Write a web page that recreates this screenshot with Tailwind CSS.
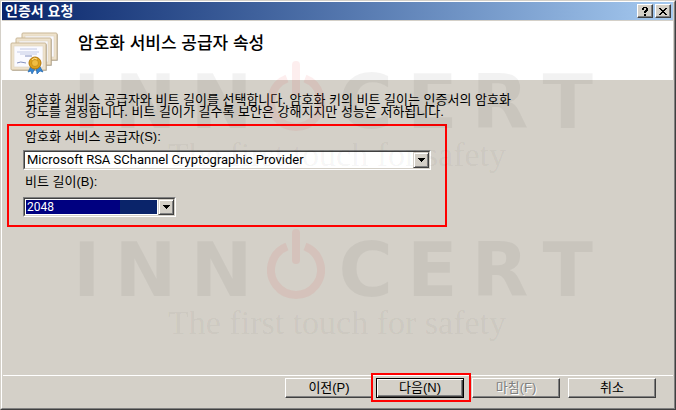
<!DOCTYPE html>
<html lang="ko">
<head>
    <meta charset="UTF-8">
    <title>인증서 요청</title>
    <meta name="viewport" content="width=device-width, initial-scale=1.0">
    <script src="https://cdn.jsdelivr.net/npm/@tailwindcss/browser@4"></script>
</head>
<body class="bg-[#d4d0c8] text-black text-[13px] font-['Liberation_Sans','Noto_Sans_CJK_KR',sans-serif]">
    <div class="relative min-h-screen flex flex-col overflow-hidden border-l border-t border-r border-b border-[#d4d0c8] border-r-[#404040] border-b-[#404040]">
        <div class="grow flex flex-col border border-white border-r-[#808080] border-b-[#808080]">

            <!-- Title bar -->
            <header class="h-[18px] mr-px flex items-center pl-[3px] pr-[2px] bg-linear-to-r from-[#0a246a] to-[#a6caf0]">
                <h1 class="grow text-white text-[14px] leading-[18px] font-bold">인증서 요청</h1>
                <div class="flex gap-[2px]">
                    <button aria-label="도움말" class="w-4 h-[14px] flex items-center justify-center bg-[#d4d0c8] border border-white border-r-[#404040] border-b-[#404040] shadow-[inset_-1px_-1px_#808080]">
                        <svg class="w-[6px] h-[9px]" viewBox="0 0 6 9" shape-rendering="crispEdges"><path d="M1 0h4v1h1v3h-1v1h-1v1h-2v-2h1v-1h1v-2h-2v2h-2v-2h1zM2 7h2v2h-2z"/></svg>
                    </button>
                    <button aria-label="닫기" class="w-4 h-[14px] flex items-center justify-center bg-[#d4d0c8] border border-white border-r-[#404040] border-b-[#404040] shadow-[inset_-1px_-1px_#808080]">
                        <svg class="w-2 h-[7px]" viewBox="0 0 8 7" shape-rendering="crispEdges"><path d="M0 0h2v1h1v1h2v-1h1v-1h2v1h-1v1h-1v1h-1v1h1v1h1v1h1v1h-2v-1h-1v-1h-2v1h-1v1h-2v-1h1v-1h1v-1h1v-1h-1v-1h-1v-1h-1z"/></svg>
                    </button>
                </div>
            </header>

            <!-- Wizard heading -->
            <div class="mt-px mr-px h-[59px] flex items-start bg-white pl-2 pt-[11px]">
                <svg class="w-12 h-11 shrink-0" viewBox="0 0 48 44">
                    <defs>
                        <g id="sheet">
                            <rect x="1" y="1" width="35" height="27" rx="1" fill="#8a8377" opacity=".6"/>
                            <rect width="35" height="27" rx="1" fill="#eee2cc" stroke="#c9b797"/>
                            <rect x="3" y="3" width="29" height="21" fill="#fafaff" stroke="#ded3c0" stroke-width=".6"/>
                        </g>
                    </defs>
                    <use href="#sheet" x="12" y="1"/>
                    <use href="#sheet" x="6" y="6"/>
                    <use href="#sheet" x="1" y="11"/>
                    <path d="M10 17h17M7 20h22M10 22h17" stroke="#b4bddd" stroke-width=".8"/>
                    <path d="M15 24h7M7 31q3-2 9 0" stroke="#7784b5" stroke-width=".9" fill="none"/>
                    <path d="M21 34l-3 6 3-1 1 3 4-7zM26 35l1 7 3-3 3 1-4-7z" fill="#3486d5" stroke="#165da4" stroke-width=".6"/>
                    <circle cx="25" cy="31" r="6" fill="#dda11c" stroke="#b4780b"/>
                    <circle cx="25" cy="31" r="3.5" fill="#efbd42" stroke="#be850f" stroke-width=".7"/>
                    <path d="M22 28q2-3 5-1" fill="none" stroke="#ffe59b"/>
                </svg>
                <h2 class="ml-5 text-[17px] leading-6 font-medium">암호화 서비스 공급자 속성</h2>
            </div>

            <!-- Settings -->
            <main class="grow pl-[5px] pt-[14px]">
                <p class="pl-[18px] leading-[12px]">암호화 서비스 공급자와 비트 길이를 선택합니다. 암호화 키의 비트 길이는 인증서의 암호화<br>강도를 결정합니다. 비트 길이가 길수록 보안은 강해지지만 성능은 저하됩니다.</p>

                <form class="mt-[6px] w-[66%] h-[103px] border-2 border-[#ff0000] pl-[14px] pr-[14px] flex flex-col items-start">
                    <label for="provider" class="mt-[2px] leading-[18px] pl-[2px]">암호화 서비스 공급자(S):</label>
                    <div class="relative mt-1 w-full h-5 border border-[#808080] border-r-white border-b-white">
                        <select id="provider" class="block appearance-none w-full h-[18px] bg-white border border-[#404040] border-r-[#d4d0c8] border-b-[#d4d0c8] pl-[2px] font-['Roboto'] leading-4 rounded-none outline-none">
                            <option>Microsoft RSA SChannel Cryptographic Provider</option>
                        </select>
                        <span class="pointer-events-none absolute top-px right-px w-4 h-4 flex items-center justify-center bg-[#d4d0c8] border border-[#d4d0c8] border-r-[#404040] border-b-[#404040] shadow-[inset_1px_1px_#fff,inset_-1px_-1px_#808080]">
                            <svg class="w-[7px] h-1" viewBox="0 0 7 4" shape-rendering="crispEdges"><path d="M0 0h7v1h-1v1h-1v1h-1v1h-1v-1h-1v-1h-1v-1h-1z"/></svg>
                        </span>
                    </div>
                    <label for="bits" class="mt-[3px] leading-[18px] pl-[2px]">비트 길이(B):</label>
                    <div class="relative mt-[6px] w-[153px] h-5 border border-[#808080] border-r-white border-b-white">
                        <div class="h-[18px] bg-white border border-[#404040] border-r-[#d4d0c8] border-b-[#d4d0c8] p-px pr-[17px]">
                            <select id="bits" class="block appearance-none w-full h-[14px] bg-linear-to-r from-[#000080] from-72% to-[#0a246a] to-72% text-white pl-px font-['Roboto'] text-[12px] leading-[14px] rounded-none outline-none">
                                <option>2048</option>
                            </select>
                        </div>
                        <span class="pointer-events-none absolute top-px right-px w-4 h-4 flex items-center justify-center bg-[#d4d0c8] border border-[#d4d0c8] border-r-[#404040] border-b-[#404040] shadow-[inset_1px_1px_#fff,inset_-1px_-1px_#808080]">
                            <svg class="w-[7px] h-1" viewBox="0 0 7 4" shape-rendering="crispEdges"><path d="M0 0h7v1h-1v1h-1v1h-1v1h-1v-1h-1v-1h-1v-1h-1z"/></svg>
                        </span>
                    </div>
                </form>
            </main>

            <!-- Wizard buttons -->
            <footer class="ml-px mr-px border-t border-white pt-[2px] pb-[10px] pr-[17px] flex justify-end gap-2">
                <div class="flex gap-[3px]">
                    <button class="w-[88px] h-5 leading-[18px] bg-[#d4d0c8] border border-white border-r-[#404040] border-b-[#404040] shadow-[inset_-1px_-1px_#808080]">이전(P)</button>
                    <div class="relative">
                        <button class="w-[88px] h-5 leading-[18px] bg-[#d4d0c8] border border-black shadow-[inset_1px_1px_#fff,inset_-1px_-1px_#404040,inset_-2px_-2px_#808080]">다음(N)</button>
                        <span class="pointer-events-none absolute -top-[5px] -bottom-[4px] -left-[5px] -right-[7px] border-2 border-[#ff0000]"></span>
                    </div>
                </div>
                <button disabled class="w-[88px] h-5 leading-[18px] text-[#808080] text-shadow-[1px_1px_0_#fff] bg-[#d4d0c8] border border-white border-r-[#404040] border-b-[#404040] shadow-[inset_-1px_-1px_#808080]">마침(F)</button>
                <button class="w-[88px] h-5 leading-[18px] bg-[#d4d0c8] border border-white border-r-[#404040] border-b-[#404040] shadow-[inset_-1px_-1px_#808080]">취소</button>
            </footer>
        </div>

        <!-- Watermarks -->
        <div aria-hidden="true" class="pointer-events-none absolute inset-x-0 top-[60px] flex flex-col gap-12 pl-[72px] pr-[82px] text-black/5">
            <div class="h-[120px]">
                <div class="flex justify-between h-[70px] font-['DejaVu_Sans'] font-bold text-[74px] leading-[83px]">
                    <span>I</span><span>N</span><span>N</span>
                    <svg class="w-[58px] h-[70px] text-[#e02020]/8" viewBox="0 0 58 70" fill="none" stroke="currentColor">
                        <path d="M20 17.600A25 25 0 1 0 38 17.600" stroke-width="8"/>
                        <path d="M29 4v27" stroke-width="8" stroke-linecap="round"/>
                    </svg>
                    <span>C</span><span>E</span><span>R</span><span>T</span>
                </div>
                <p class="text-center pl-[8px] font-['Liberation_Serif'] text-[34px] leading-[48px]">The first touch for safety</p>
            </div>
            <div class="h-[120px]">
                <div class="flex justify-between h-[70px] font-['DejaVu_Sans'] font-bold text-[74px] leading-[83px]">
                    <span>I</span><span>N</span><span>N</span>
                    <svg class="w-[58px] h-[70px] text-[#e02020]/8" viewBox="0 0 58 70" fill="none" stroke="currentColor">
                        <path d="M20 17.600A25 25 0 1 0 38 17.600" stroke-width="8"/>
                        <path d="M29 4v27" stroke-width="8" stroke-linecap="round"/>
                    </svg>
                    <span>C</span><span>E</span><span>R</span><span>T</span>
                </div>
                <p class="text-center pl-[8px] font-['Liberation_Serif'] text-[34px] leading-[48px]">The first touch for safety</p>
            </div>
        </div>
    </div>
</body>
</html>
